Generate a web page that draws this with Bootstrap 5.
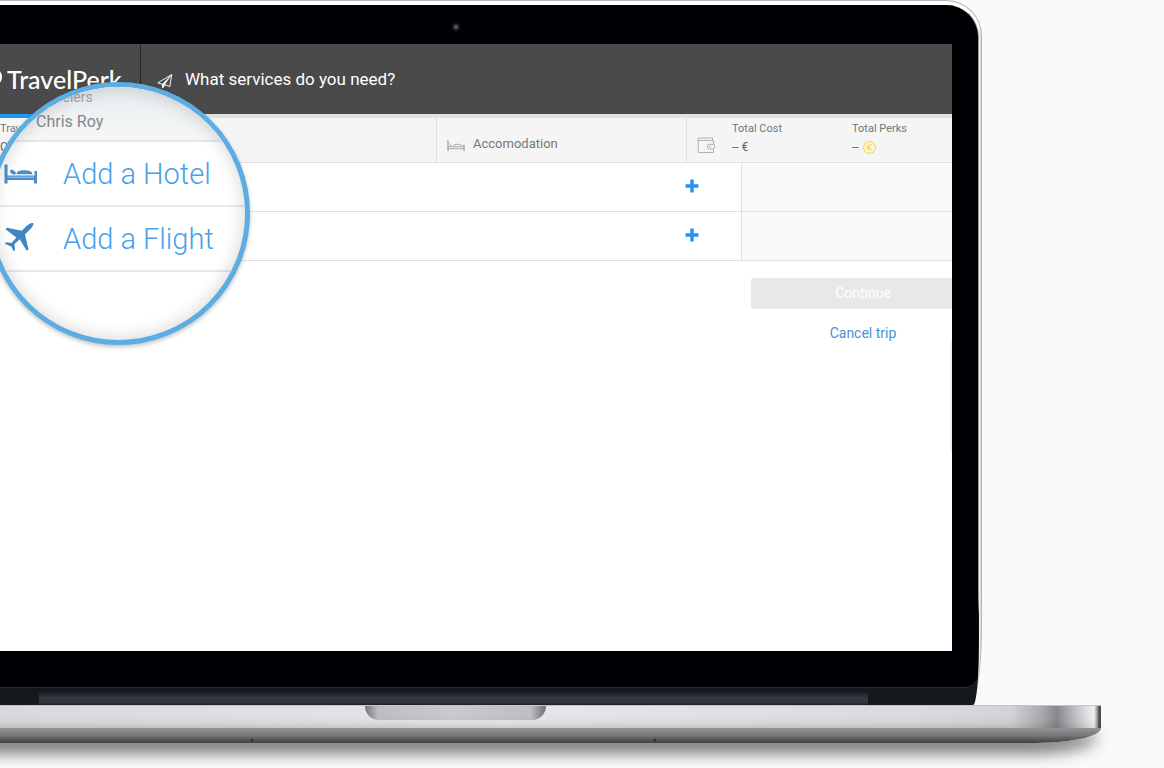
<!DOCTYPE html>
<html lang="en">
<head>
<meta charset="utf-8">
<meta name="viewport" content="width=device-width, initial-scale=1">
<title>TravelPerk – What services do you need?</title>
<link href="https://cdn.jsdelivr.net/npm/bootstrap@5.3.0/dist/css/bootstrap.min.css" rel="stylesheet">
<style>
  body { font-family: Roboto, "Liberation Sans", sans-serif; font-size: 14px; line-height: 20px; color: #777; background: #fafafa; }
  a { text-decoration: none; }

  /* laptop lid */
  .lid-rim { margin-right: 182px; padding: 4px 2px 0 0; background: linear-gradient(to left, #dedede 1px, #fff 2px); border: 1px solid #b5b5b5; border-width: 1px 1px 0 0; border-radius: 0 36px 12px 0 / 0 36px 80px 0; }
  .lid-shell { background: linear-gradient(to top, #15181c 60px, #08090c 90px, #77787b 100px, #999 110px); border-radius: 0 32px 6px 0 / 0 32px 60px 0; }
  .bezel { background: #000004; margin-right: 1px; padding: 0 26px 36px 0; border-radius: 0 32px 14px 0; border-bottom: 1px solid #2b2d30; }
  .camera-bar { height: 39px; padding-top: 18px; padding-left: 452px; }
  .camera { width: 8px; height: 8px; border-radius: 50%; background: radial-gradient(#6b7480 10%, #232933 35%, #111217 75%); }
  .hinge { height: 17px; padding: 3px 111px 0 39px; }
  .hinge-strip { height: 14px; background: linear-gradient(#15181c, #343841 50%, #30343c 85%, #1c1f24); }

  /* application */
  .screen { background: #fff; }
  .app-head { height: 70px; background: #4a4a4a; color: #fff; }
  .brand-link { width: 141px; border-right: 1px solid #262626; color: #fff; font: 500 25px/28px Lato, sans-serif; }
  .brand-link:hover { color: #fff; }
  .brand-mark { margin-left: -16px; margin-right: 5px; }
  .app-title { font-size: 17px; line-height: 24px; }
  .steps { height: 49px; background: #f5f5f5; border-top: 4px solid #e2e2e2; border-bottom: 1px solid #e0e0e0; }
  .step-current { width: 120px; margin-top: -4px; border-top: 4px solid #2196f3; }
  .step-room { width: 250px; border-left: 1px solid #e0e0e0; padding: 16px 10px 0; font-size: 13px; }
  .step-total { width: 266px; border-left: 1px solid #e0e0e0; padding-left: 10px; }
  .wallet { margin-top: 19px; }
  .tiny { font-size: 11px; line-height: 14px; }
  .total-cell { width: 120px; padding-top: 4px; flex: none; }
  .total-value { font-size: 12px; line-height: 22px; height: 22px; color: #666; }
  .side-col { width: 211px; }
  .trip-row { height: 49px; border-bottom: 1px solid #e0e0e0; }
  .trip-row .side-col { background: #fafafa; border-left: 1px solid #e0e0e0; }
  .add-cell { padding-right: 42px; padding-bottom: 2px; }
  .action-col { width: 201px; padding-top: 17px; }
  .action-col > * { width: 224px; }
  .btn-continue, .btn-continue:disabled { background: #e8e8e8; color: #fff; border: 0; border-radius: 2px; font-size: 14px; line-height: 20px; padding: 5px 0 6px; opacity: 1; }
  .cancel-link { color: #4a90d9; margin-top: 14px; }
  .scroll-edge { right: 0; top: 296px; width: 2px; height: 112px; background: linear-gradient(to left, #e4e4e4, #fff); }

  /* magnifying lens over the screen */
  .lens { left: -13px; top: 82px; width: 263px; height: 263px; border: 5px solid #5dade2; border-radius: 50%; background: #fff; box-shadow: 0 2px 4px rgba(0,0,0,.25); }
  .lens::after { content: ""; position: absolute; inset: 0; border-radius: 50%; box-shadow: inset 0 0 18px rgba(0,0,0,.18); pointer-events: none; }
  .lens-who { height: 55px; padding-left: 44px; background: linear-gradient(#e9ecee, #f5f7f8); border-bottom: 2px solid #e6e8ea; color: #85888a; }
  .lens-label { font-size: 14px; line-height: 20px; color: #a2a5a7; }
  .lens-name { font-size: 16px; line-height: 24px; margin-top: 3px; }
  .lens-row { height: 65px; border-bottom: 2px solid #e6e8ea; padding-left: 12px; gap: 25px; font-size: 29px; line-height: 36px; font-weight: 300; color: #46a0ea; }

  /* laptop base */
  .base-wrap { padding-right: 63px; padding-bottom: 25px; }
  .base-top { height: 23px; border-top: 1px solid #c4c4c6; background: linear-gradient(to left, #4e4e50 2px, #a2a3a5 4px, #efeff0 7px, #dedfe0 14px, #b9babe 28px, #87888e 44px, #aaabaf 60px, #d2d3d6 90px, #d9dadc 180px, #e0e1e3 400px, #e7e7e9 600px, #dfe0e2 820px, #d8d9db); }
  .notch { width: 181px; height: 14px; margin-left: 365px; border-radius: 0 0 14px 14px; background: linear-gradient(to right, #737477, #bdbec2 13px, #c9cacd 50%, #bdbec2 166px, #6e6f72); }
  .base-under { height: 15px; margin-left: -40px; border-radius: 0 0 65px 0 / 0 0 15px 0; background: radial-gradient(circle at 292px 12px, #333 1px, transparent 2px), radial-gradient(circle at 695px 12px, #333 1px, transparent 2px), linear-gradient(#959595, #777 50%, #3f3f3f); box-shadow: -6px 8px 16px 2px rgba(0,0,0,.55); }
</style>
</head>
<body>
<div class="position-relative overflow-hidden d-flex flex-column min-vh-100">
  <div class="lid-rim flex-grow-1 d-flex">
    <div class="lid-shell flex-grow-1 d-flex flex-column">
      <div class="bezel flex-grow-1 d-flex flex-column">
        <div class="camera-bar"><div class="camera"></div></div>
        <main class="screen flex-grow-1 position-relative overflow-hidden">
          <header class="app-head d-flex">
            <a class="brand-link d-flex align-items-center flex-shrink-0" href="#">
              <svg class="brand-mark" width="18" height="18" viewBox="0 0 18 18" fill="none" stroke="#fff" stroke-width="2" aria-hidden="true"><circle cx="9" cy="7" r="8"/></svg>
              <span>TravelPerk</span>
            </a>
            <div class="d-flex align-items-center ps-3">
              <svg class="me-2 mt-1" width="16" height="16" viewBox="0 0 15 15" fill="none" stroke="#fff" stroke-width=".9" stroke-linejoin="round" aria-hidden="true"><path d="M.8 9.2 13.8 1.5 12 12.800 7.700 11 5.400 13.800 5 10.600Z"/><path d="M5 10.600 13.800 1.500 7.200 10.800 5.400 13.800Z" fill="#fff" stroke-width=".4"/></svg>
              <h1 class="app-title fw-normal mb-0 ms-1">What services do you need?</h1>
            </div>
          </header>

          <section class="steps d-flex">
            <div class="flex-grow-1">
              <div class="step-current">
                <div class="tiny pt-1">Travelers</div>
                <div class="total-value">Chris Roy</div>
              </div>
            </div>
            <div class="step-room d-flex gap-2">
              <svg class="mt-1" width="18" height="14" viewBox="0 0 18 14" fill="none" stroke="#aaa" aria-hidden="true"><path d="M1 2v11M17 6.500v6.500" stroke-width="1.400"/><path d="M1 10.700h16M1 8.700h16M2.800 5.300l1.500 2.700M6.500 8c.3-1.500 1.700-1.700 4-1.700s4 .3 4.500 1.700"/></svg>
              <span>Accomodation</span>
            </div>
            <div class="step-total d-flex overflow-hidden">
              <svg class="wallet flex-shrink-0 me-3" width="19" height="17" viewBox="0 0 19 17" fill="none" stroke="#b0b0b0" aria-hidden="true"><path d="M15.500 3.500V1H2.200C0 1 0 3.500 2 3.500H16.500V7.300M16.500 12.200V15.500H1.200V2.500"/><rect x="10.500" y="7.300" width="7.200" height="4.600" rx="1.600"/><circle cx="13" cy="9.600" r=".5"/></svg>
              <div class="total-cell">
                <div class="tiny">Total Cost</div>
                <div class="total-value">-- €</div>
              </div>
              <div class="total-cell">
                <div class="tiny">Total Perks</div>
                <div class="total-value d-flex align-items-center gap-1">--
                  <svg width="13" height="13" viewBox="0 0 13 13" fill="none" stroke="#f7cf3d" aria-label="Perk coins"><circle cx="6.500" cy="6.500" r="5.900"/><path d="M9 4.200C6.900 2.800 4.900 4.200 4.900 6.500s2 3.700 4.100 2.300M3.500 5.800h4M3.500 7.300h4"/></svg>
                </div>
              </div>
            </div>
          </section>

          <div class="trip-row d-flex">
            <div class="add-cell flex-grow-1 d-flex align-items-center justify-content-end">
              <button class="btn p-0 border-0 d-flex" type="button" aria-label="Add a hotel"><svg width="14" height="14" viewBox="0 0 14 14" stroke="#2593f1" stroke-width="3.400"><path d="M7 2.200v9.600M2.200 7h9.600" stroke-linecap="square"/></svg></button>
            </div>
            <div class="side-col"></div>
          </div>
          <div class="trip-row d-flex">
            <div class="add-cell flex-grow-1 d-flex align-items-center justify-content-end">
              <button class="btn p-0 border-0 d-flex" type="button" aria-label="Add a flight"><svg width="14" height="14" viewBox="0 0 14 14" stroke="#2593f1" stroke-width="3.400"><path d="M7 2.200v9.600M2.200 7h9.600" stroke-linecap="square"/></svg></button>
            </div>
            <div class="side-col"></div>
          </div>

          <div class="action-col ms-auto">
            <button class="btn btn-continue d-block" type="button" disabled>Continue</button>
            <a class="cancel-link d-block text-center" href="#">Cancel trip</a>
          </div>
          <div class="scroll-edge position-absolute"></div>
        </main>
      </div>
      <div class="hinge"><div class="hinge-strip"></div></div>
    </div>
  </div>

  <div class="base-wrap">
    <div class="base-top"><div class="notch"></div></div>
    <div class="base-under"></div>
  </div>

  <aside class="lens position-absolute overflow-hidden">
    <div class="lens-who">
      <div class="lens-label">Travelers</div>
      <div class="lens-name">Chris Roy</div>
    </div>
    <a class="lens-row d-flex align-items-center" href="#">
      <svg width="34" height="24" viewBox="0 0 34 24" fill="#4a8fc9" aria-hidden="true"><path d="M.5 2.500h3v11h27V9H33v12.500h-3v-3.500H3.500v3.500h-3Z"/><path d="M6 8.500 8.500 7.500l4 3.500-2 1.700C7.500 12.500 6.200 11 6 8.500ZM12.500 12.300C13 9 15 8.300 20 8.300s8 .8 8.500 4Z"/><path d="M3.500 15.200H30" stroke="#a9cdec"/></svg>
      <span>Add a Hotel</span>
    </a>
    <a class="lens-row d-flex align-items-center" href="#">
      <svg width="34" height="34" viewBox="1 2 34 34" fill="#3f86c4" aria-hidden="true"><path d="M30.200 3.200c.8 1-.8 3.800-2.600 5.600L22 14.600 25.500 29.500l-1.800 1.200-7-11.400-5.200 4.700.5 6-1.300 1.300-2.400-4.800-6.500-2.700 1.300-1.500 5.500.7 4.700-5.600L2.600 9.200l1.300-1.500L18.800 10.800 24 5.600C26 3.800 29 2.300 30.200 3.200Z"/></svg>
      <span>Add a Flight</span>
    </a>
  </aside>
</div>
<script src="https://cdn.jsdelivr.net/npm/bootstrap@5.3.0/dist/js/bootstrap.bundle.min.js"></script>
</body>
</html>
